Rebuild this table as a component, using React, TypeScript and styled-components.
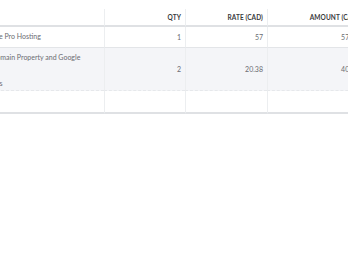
import React from "react";
import styled, { createGlobalStyle } from "styled-components";

const Global = createGlobalStyle`
  html, body { margin: 0; padding: 0; background: #ffffff; }
  body { font-family: Lato, "Open Sans", Arial, sans-serif; }
`;

const Viewport = styled.div`
  width: 348px;
  height: 268px;
  overflow: hidden;
  padding-top: 9px;
  box-sizing: border-box;
  background: #fff;
`;

const Table = styled.div`
  margin-left: -9px;
  width: 372px;
  display: grid;
  grid-template-columns: 113px 81px 82px 96px;
`;

const HeadCell = styled.div<{ $first?: boolean }>`
  border-bottom: 2px solid #dfe1e4;
  border-left: ${(p) => (p.$first ? "none" : "1px solid #eceef0")};
  display: flex;
  align-items: center;
  justify-content: flex-end;
  padding-right: 4px;
  font-size: 6.5px;
  font-weight: 700;
  color: #393a3d;
  letter-spacing: 0.1px;
  white-space: nowrap;
  box-sizing: border-box;
  height: 18px;
`;

const Cell = styled.div<{
  $first?: boolean;
  $shaded?: boolean;
  $border: "solid" | "dashed" | "last";
  $h: number;
}>`
  height: ${(p) => p.$h}px;
  box-sizing: border-box;
  background: ${(p) => (p.$shaded ? "#f4f5f8" : "#ffffff")};
  border-left: ${(p) => (p.$first ? "none" : "1px solid #eceef0")};
  border-bottom: ${(p) =>
    p.$border === "last"
      ? "2px solid #dfe1e4"
      : p.$border === "dashed"
      ? "1px dashed #e6e8eb"
      : "1px solid #e3e5e8"};
  font-size: 7px;
  color: #6b6c72;
  white-space: nowrap;
  overflow: hidden;
`;

const DescText = styled.div`
  padding: 3px 0 0 0;
  line-height: 13px;
  white-space: pre;
`;

const Num = styled.div`
  height: 100%;
  display: flex;
  align-items: center;
  justify-content: flex-end;
  padding-right: 4px;
`;

type Row = { desc: string; qty: string; rate: string; amount: string; h: number; shaded?: boolean; border: "solid" | "dashed" | "last" };

const rows: Row[] = [
  { desc: "Site Pro Hosting", qty: "1", rate: "57", amount: "57.00", h: 21, border: "solid" },
  { desc: "Domain Property and Google\n\nAds", qty: "2", rate: "20.38", amount: "40.76", h: 43, shaded: true, border: "dashed" },
  { desc: "", qty: "", rate: "", amount: "", h: 23, border: "last" },
];

export default function App() {
  return (
    <>
      <Global />
      <Viewport>
        <Table>
          <HeadCell $first />
          <HeadCell>QTY</HeadCell>
          <HeadCell>RATE (CAD)</HeadCell>
          <HeadCell>AMOUNT (CAD)</HeadCell>
          {rows.map((r, i) => (
            <React.Fragment key={i}>
              <Cell $first $shaded={r.shaded} $border={r.border} $h={r.h}>
                <DescText>{r.desc}</DescText>
              </Cell>
              <Cell $shaded={r.shaded} $border={r.border} $h={r.h}>
                <Num>{r.qty}</Num>
              </Cell>
              <Cell $shaded={r.shaded} $border={r.border} $h={r.h}>
                <Num>{r.rate}</Num>
              </Cell>
              <Cell $shaded={r.shaded} $border={r.border} $h={r.h}>
                <Num>{r.amount}</Num>
              </Cell>
            </React.Fragment>
          ))}
        </Table>
      </Viewport>
    </>
  );
}
